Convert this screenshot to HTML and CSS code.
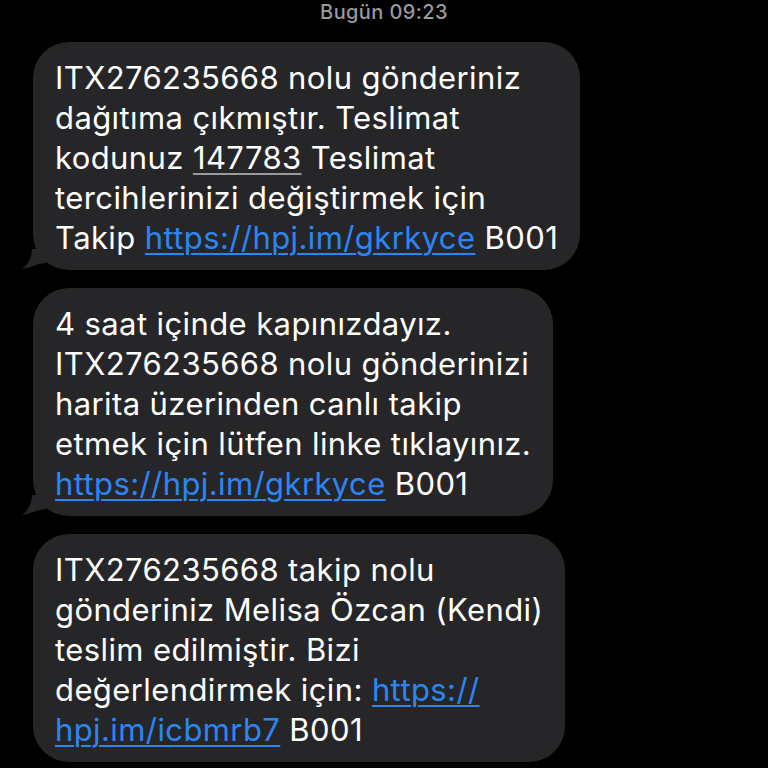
FILE: index.html
```html
<!DOCTYPE html>
<html lang="tr">
<head>
<meta charset="utf-8">
<link rel="stylesheet" href="styles.css">
</head>
<body>
<div class="thread">
  <div class="stamp">Bugün 09:23</div>
  <div class="bubble">
    <p class="msg">ITX276235668 nolu gönderiniz<br>dağıtıma çıkmıştır. Teslimat<br>kodunuz <span class="code">147783</span> Teslimat<br>tercihlerinizi değiştirmek için<br>Takip <a class="link">https://hpj.im/gkrkyce</a> B001</p>
    <svg class="tail" width="24" height="22" viewBox="0 0 24 22"><path d="M24 0 L24 14 C18 14 10 18 0 20 C6 16 10 8 10 0 Z" fill="#262628"/></svg>
  </div>
  <div class="bubble">
    <p class="msg">4 saat içinde kapınızdayız.<br>ITX276235668 nolu gönderinizi<br>harita üzerinden canlı takip<br>etmek için lütfen linke tıklayınız.<br><a class="link">https://hpj.im/gkrkyce</a> B001</p>
    <svg class="tail" width="24" height="22" viewBox="0 0 24 22"><path d="M24 0 L24 14 C18 14 10 18 0 20 C6 16 10 8 10 0 Z" fill="#262628"/></svg>
  </div>
  <div class="bubble">
    <p class="msg">ITX276235668 takip nolu<br>gönderiniz Melisa Özcan (Kendi)<br>teslim edilmiştir. Bizi<br>değerlendirmek için: <a class="link">https://</a><br><a class="link">hpj.im/icbmrb7</a> B001</p>
  </div>
</div>
</body>
</html>
```
FILE: styles.css
```css
html, body {
  margin: 0;
  padding: 0;
  background: #000;
  height: 100%;
  overflow: hidden;
}
.thread {
  display: flex;
  flex-direction: column;
  align-items: flex-start;
  gap: 18px;
  padding-left: 33px;
  font-family: Inter, "Open Sans", sans-serif;
}
.stamp {
  align-self: center;
  margin-left: -33px;
  color: #98989d;
  font-size: 20px;
  font-weight: 500;
  letter-spacing: 0.4px;
  line-height: 24px;
  margin-bottom: 0;
}
.bubble {
  position: relative;
  background: #262628;
  border-radius: 36px;
  padding: 16px 22px 12px 22px;
}
.msg {
  margin: 0;
  color: #fff;
  font-size: 31px;
  line-height: 40px;
  letter-spacing: 0.4px;
  white-space: nowrap;
}
.code {
  text-decoration: underline;
  text-decoration-color: #9a9a9e;
  text-decoration-thickness: 2px;
  text-underline-offset: 4px;
}
.link {
  color: #2b86f5;
  text-decoration: underline;
  text-decoration-thickness: 2px;
  text-underline-offset: 4px;
}
.tail {
  position: absolute;
  left: -11px;
  bottom: -1px;
}
```
